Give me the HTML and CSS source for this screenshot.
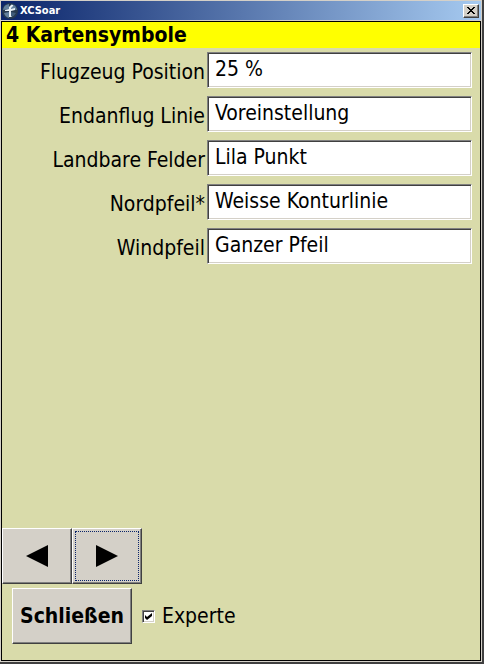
FILE: index.html
```html
<!DOCTYPE html>
<html lang="de">
<head>
<meta charset="utf-8">
<title>XCSoar</title>
<link rel="stylesheet" href="styles.css">
</head>
<body>
<div class="window">
  <header class="titlebar">
    <svg class="app-icon" viewBox="0 0 16 16" aria-hidden="true">
      <circle cx="8" cy="8" r="8" fill="#26394f"/>
      <path d="M1 7A7 7 0 0 1 7 1v5zM9 1a7 7 0 0 1 6 6L9 6zM2 10l5-1v6a7 7 0 0 1-5-5z" fill="#62809e"/>
      <path d="M9 9l5 1a7 7 0 0 1-5 4z" fill="#405c7a"/>
      <path d="M3 7l4-1V4l2-2h2v1L9 5v1l4-1v2L9 8v5l1 1H7V8L3 8z" fill="#e8f0f6"/>
    </svg>
    <span class="app-name">XCSoar</span>
    <button class="close" type="button" aria-label="Fenster schließen">
      <svg viewBox="0 0 8 7" aria-hidden="true"><path d="M0 0h2v1h1v1h2V1h1V0h2v1H7v1H6v1H5v1h1v1h1v1h1v1H6V6H5V5H3v1H2v1H0V6h1V5h1V4h1V3H2V2H1V1H0z" fill="#000"/></svg>
    </button>
  </header>
  <main class="panel">
    <h1 class="heading">4 Kartensymbole</h1>
    <form class="form">
      <div class="row"><label for="position">Flugzeug Position</label><input id="position" type="text" value="25 %"></div>
      <div class="row"><label for="final">Endanflug Linie</label><input id="final" type="text" value="Voreinstellung"></div>
      <div class="row"><label for="fields">Landbare Felder</label><input id="fields" type="text" value="Lila Punkt"></div>
      <div class="row"><label for="north">Nordpfeil*</label><input id="north" type="text" value="Weisse Konturlinie"></div>
      <div class="row"><label for="wind">Windpfeil</label><input id="wind" type="text" value="Ganzer Pfeil"></div>
    </form>
    <nav class="pager">
      <button class="button" type="button" aria-label="Zurück"><svg viewBox="0 0 22 22" aria-hidden="true"><path d="M0 11L22 0v22z"/></svg></button>
      <button class="button focused" type="button" aria-label="Weiter"><svg viewBox="0 0 22 22" aria-hidden="true"><path d="M22 11L0 0v22z"/></svg></button>
    </nav>
    <footer class="actions">
      <button class="button dismiss" type="button">Schließen</button>
      <input class="check" id="expert" type="checkbox" checked>
      <label for="expert">Experte</label>
    </footer>
  </main>
</div>
</body>
</html>
```
FILE: styles.css
```css
* {
  box-sizing: border-box;
}

body {
  margin: 0;
  font-family: "DejaVu Sans Condensed", "Noto Sans", sans-serif;
  font-size: 21px;
  color: #000;
}

.window {
  display: flex;
  flex-direction: column;
  min-height: 100vh;
  padding: 1px 1px 1px 0;
  background: #d4d0c8;
  border-right: 2px solid #404040;
  border-bottom: 2px solid #404040;
}

.titlebar {
  display: flex;
  align-items: center;
  height: 19px;
  margin: 0 0 1px 1px;
  padding: 0 2px 0 1px;
  background: linear-gradient(90deg, #0a246a, #a6caf0);
}

.app-icon {
  width: 16px;
  height: 16px;
}

.app-name {
  flex: 1;
  margin-left: 2px;
  font-size: 11px;
  font-weight: bold;
  line-height: 16px;
  color: #fff;
}

.close {
  display: flex;
  align-items: center;
  justify-content: center;
  width: 16px;
  height: 14px;
  padding: 0;
  background: #d4d0c8;
  border: 1px solid;
  border-color: #fff #404040 #404040 #fff;
  box-shadow: inset -1px -1px #808080;
}

.close svg {
  width: 8px;
  height: 7px;
}

.panel {
  display: flex;
  flex: 1;
  flex-direction: column;
  margin-left: 1px;
  background: #d9dbaa;
  border: 1px solid #000;
}

.heading {
  margin: 0;
  padding: 0 4px;
  background: #ff0;
  font-size: 21px;
  line-height: 26px;
}

.form {
  display: flex;
  flex: 1;
  flex-direction: column;
  gap: 8px;
  padding: 4px 8px;
}

.row {
  display: grid;
  grid-template-columns: 195px 1fr;
  gap: 2px;
}

.row label {
  padding-top: 4px;
  line-height: 32px;
  text-align: right;
}

.row input {
  width: 100%;
  min-width: 0;
  height: 36px;
  padding: 0 7px 2px;
  background: #fff;
  border: 1px solid;
  border-color: #808080 #fff #fff #808080;
  border-radius: 0;
  box-shadow: inset 1px 1px #404040, inset -1px -1px #d4d0c8;
  outline: 0;
  font: inherit;
  color: inherit;
}

.button {
  display: flex;
  align-items: center;
  justify-content: center;
  width: 70px;
  height: 56px;
  padding: 0;
  background: #d4d0c8;
  border: 1px solid;
  border-color: #fff #404040 #404040 #fff;
  border-radius: 0;
  box-shadow: inset -1px -1px #808080;
  font: inherit;
  font-weight: bold;
  color: #000;
}

.button svg {
  width: 22px;
  height: 22px;
}

.focused {
  outline: 1px dotted #0a246a;
  outline-offset: -4px;
}

.pager {
  display: flex;
}

.actions {
  display: flex;
  align-items: center;
  padding: 4px 10px 16px;
}

.dismiss {
  width: 120px;
}

.check {
  width: 13px;
  height: 13px;
  margin: 0 7px 0 10px;
  appearance: none;
  background: #fff url("data:image/svg+xml,%3Csvg xmlns='http://www.w3.org/2000/svg' viewBox='0 0 7 7'%3E%3Cpath d='M0 2l2 2 5-4v3L2 7 0 5z'/%3E%3C/svg%3E") center / 7px 7px no-repeat;
  border: 1px solid;
  border-color: #808080 #fff #fff #808080;
  box-shadow: inset 1px 1px #404040, inset -1px -1px #d4d0c8;
}
```
